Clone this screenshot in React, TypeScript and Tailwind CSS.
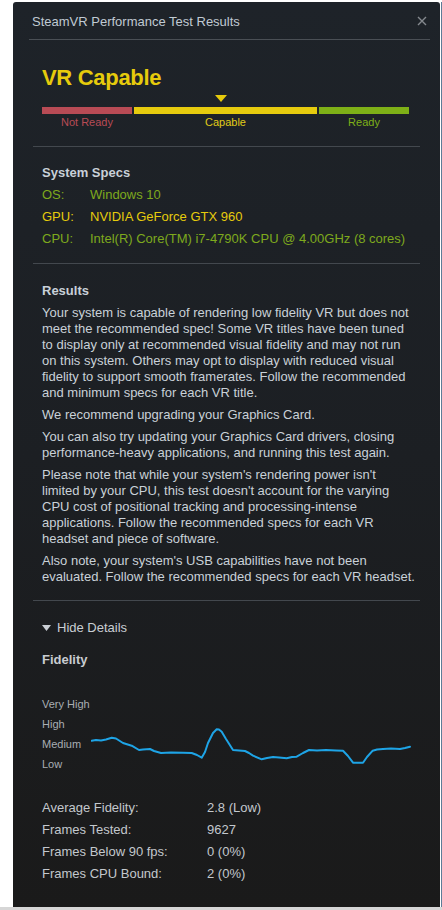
import React from "react";

const chartPts: [number, number][] = [
  [0.7, 46.7], [5, 46], [10, 46.5], [15, 45.5], [20.7, 43.7], [25, 44.5], [32, 49], [40.7, 51.7],
  [48, 56], [52, 55.5], [59, 55], [63, 57], [70, 59], [80, 58.5], [92, 58.7], [100.7, 59],
  [106, 61], [110.7, 63.7], [114, 58], [117, 49], [122, 39], [125.7, 35.3], [128, 35.5],
  [130.7, 37.7], [135, 45], [142, 56], [148, 56.5], [154, 57], [158, 59], [162, 61.7],
  [170.7, 65.3], [176, 64], [182, 63], [188, 63.5], [195.7, 64.3], [201, 63], [205.7, 62.7],
  [212, 59], [218, 56], [226, 56.5], [235, 56], [245, 56.5], [252, 56.7], [257, 62],
  [262, 68.7], [268, 68.7], [272, 68.7], [276, 63], [281.7, 56.7], [286, 55.5], [292, 55],
  [300, 54.5], [309, 55], [314, 54], [319, 52.7],
];

function Divider() {
  return <div className="h-px bg-[#43484e]" />;
}

export default function App() {
  const d = chartPts.map((p, i) => `${i === 0 ? "M" : "L"}${p[0]} ${p[1]}`).join(" ");
  return (
    <div
      className="w-[442px] h-[910px] bg-white flex flex-col"
      style={{ fontFamily: '"Liberation Sans", Arial, sans-serif' }}
    >
      <div className="h-[2px]" />
      <div className="flex h-[905px]">
        <div className="w-[13px]" />
        <div className="w-[427px] h-full rounded-t-[3px] bg-gradient-to-b from-[#1e2329] via-[#1c1f23] to-[#1a1a1a] flex flex-col">
          {/* header */}
          <div className="h-[37px] pt-[3px] flex items-center justify-between pl-[19px] pr-[13px]">
            <span className="text-[13px] text-[#c0cad3]">SteamVR Performance Test Results</span>
            <svg width="10" height="10" viewBox="0 0 10 10" className="mt-[-2px]">
              <path d="M1 1 L9 9 M9 1 L1 9" stroke="#85898e" strokeWidth="1.4" />
            </svg>
          </div>
          <div className="ml-[16px] mr-[10px] h-px bg-[#4a4f55]" />

          <div className="px-[20px]">
            <div className="pl-[9px] pr-[3px]">
              <div className="mt-[25px] text-[22px] leading-[26px] font-bold text-[#e6cb0c] tracking-[-0.3px]">VR Capable</div>
              <div className="mt-[4px] pl-[173px] h-[7px]">
                <svg width="12" height="7" viewBox="0 0 12 7">
                  <path d="M0 0 L12 0 L6 7 Z" fill="#e6cb0c" />
                </svg>
              </div>
              <div className="mt-[5px] flex gap-[2px] h-[7px]">
                <div className="w-[90px] bg-[#b84b55]" />
                <div className="w-[183px] bg-[#e6cb0e]" />
                <div className="w-[90px] bg-[#7eb017]" />
              </div>
              <div className="mt-[1px] flex gap-[2px] text-[11px] leading-[14px]">
                <div className="w-[90px] text-center text-[#b84b55]">Not Ready</div>
                <div className="w-[183px] text-center text-[#e0cb18]">Capable</div>
                <div className="w-[90px] text-center text-[#7eb017]">Ready</div>
              </div>
            </div>
            <div className="mt-[17px]"><Divider /></div>

            <div className="pl-[9px]">
              <div className="mt-[18px] text-[13px] leading-[16px] font-bold text-[#c8d0d8]">System Specs</div>
              <div className="mt-[3px] text-[13px] leading-[22px]">
                <div className="flex text-[#7ea91d]"><span className="w-[48px]">OS:</span><span>Windows 10</span></div>
                <div className="flex text-[#e6cb0c]"><span className="w-[48px]">GPU:</span><span>NVIDIA GeForce GTX 960</span></div>
                <div className="flex text-[#7ea91d]"><span className="w-[48px]">CPU:</span><span>Intel(R) Core(TM) i7-4790K CPU @ 4.00GHz (8 cores)</span></div>
              </div>
            </div>
            <div className="mt-[13px]"><Divider /></div>

            <div className="pl-[9px] text-[13px] leading-[16px] text-[#c9d1d8]">
              <div className="mt-[19px] font-bold text-[#c8d0d8]">Results</div>
              <p className="mt-[6px] whitespace-nowrap">
                Your system is capable of rendering low fidelity VR but does not<br />
                meet the recommended spec! Some VR titles have been tuned<br />
                to display only at recommended visual fidelity and may not run<br />
                on this system. Others may opt to display with reduced visual<br />
                fidelity to support smooth framerates. Follow the recommended<br />
                and minimum specs for each VR title.
              </p>
              <p className="mt-[6px] whitespace-nowrap">We recommend upgrading your Graphics Card.</p>
              <p className="mt-[6px] whitespace-nowrap">
                You can also try updating your Graphics Card drivers, closing<br />
                performance-heavy applications, and running this test again.
              </p>
              <p className="mt-[6px] whitespace-nowrap">
                Please note that while your system's rendering power isn't<br />
                limited by your CPU, this test doesn't account for the varying<br />
                CPU cost of positional tracking and processing-intense<br />
                applications. Follow the recommended specs for each VR<br />
                headset and piece of software.
              </p>
              <p className="mt-[6px] whitespace-nowrap">
                Also note, your system's USB capabilities have not been<br />
                evaluated. Follow the recommended specs for each VR headset.
              </p>
            </div>
            <div className="mt-[15px]"><Divider /></div>

            <div className="pl-[9px] text-[13px] leading-[16px]">
              <div className="mt-[19px] flex items-center text-[#c9ced3]">
                <svg width="9" height="6" viewBox="0 0 9 6" className="mr-[6px]">
                  <path d="M0 0 L9 0 L4.5 6 Z" fill="#c9ced3" />
                </svg>
                <span>Hide Details</span>
              </div>
              <div className="mt-[16px] font-bold text-[#c8ccd0]">Fidelity</div>
              <div className="mt-[26px] flex">
                <div className="w-[49px] text-[11px] leading-[20px] text-[#a9aeb3]">
                  <div>Very High</div>
                  <div>High</div>
                  <div>Medium</div>
                  <div>Low</div>
                </div>
                <svg width="322" height="80" viewBox="0 0 322 80">
                  <path d={d} fill="none" stroke="#1ea4e6" strokeWidth="2" strokeLinejoin="round" strokeLinecap="round" />
                </svg>
              </div>
              <div className="mt-[23px] leading-[22px] text-[#c3c8cd]">
                <div className="flex"><span className="w-[165px]">Average Fidelity:</span><span>2.8 (Low)</span></div>
                <div className="flex"><span className="w-[165px]">Frames Tested:</span><span>9627</span></div>
                <div className="flex"><span className="w-[165px]">Frames Below 90 fps:</span><span>0 (0%)</span></div>
                <div className="flex"><span className="w-[165px]">Frames CPU Bound:</span><span>2 (0%)</span></div>
              </div>
            </div>
          </div>
        </div>
        <div className="w-px" />
        <div className="w-px bg-[#5c7c98]" />
      </div>
      <div className="flex-1 bg-[#d6d6d6]" />
    </div>
  );
}
